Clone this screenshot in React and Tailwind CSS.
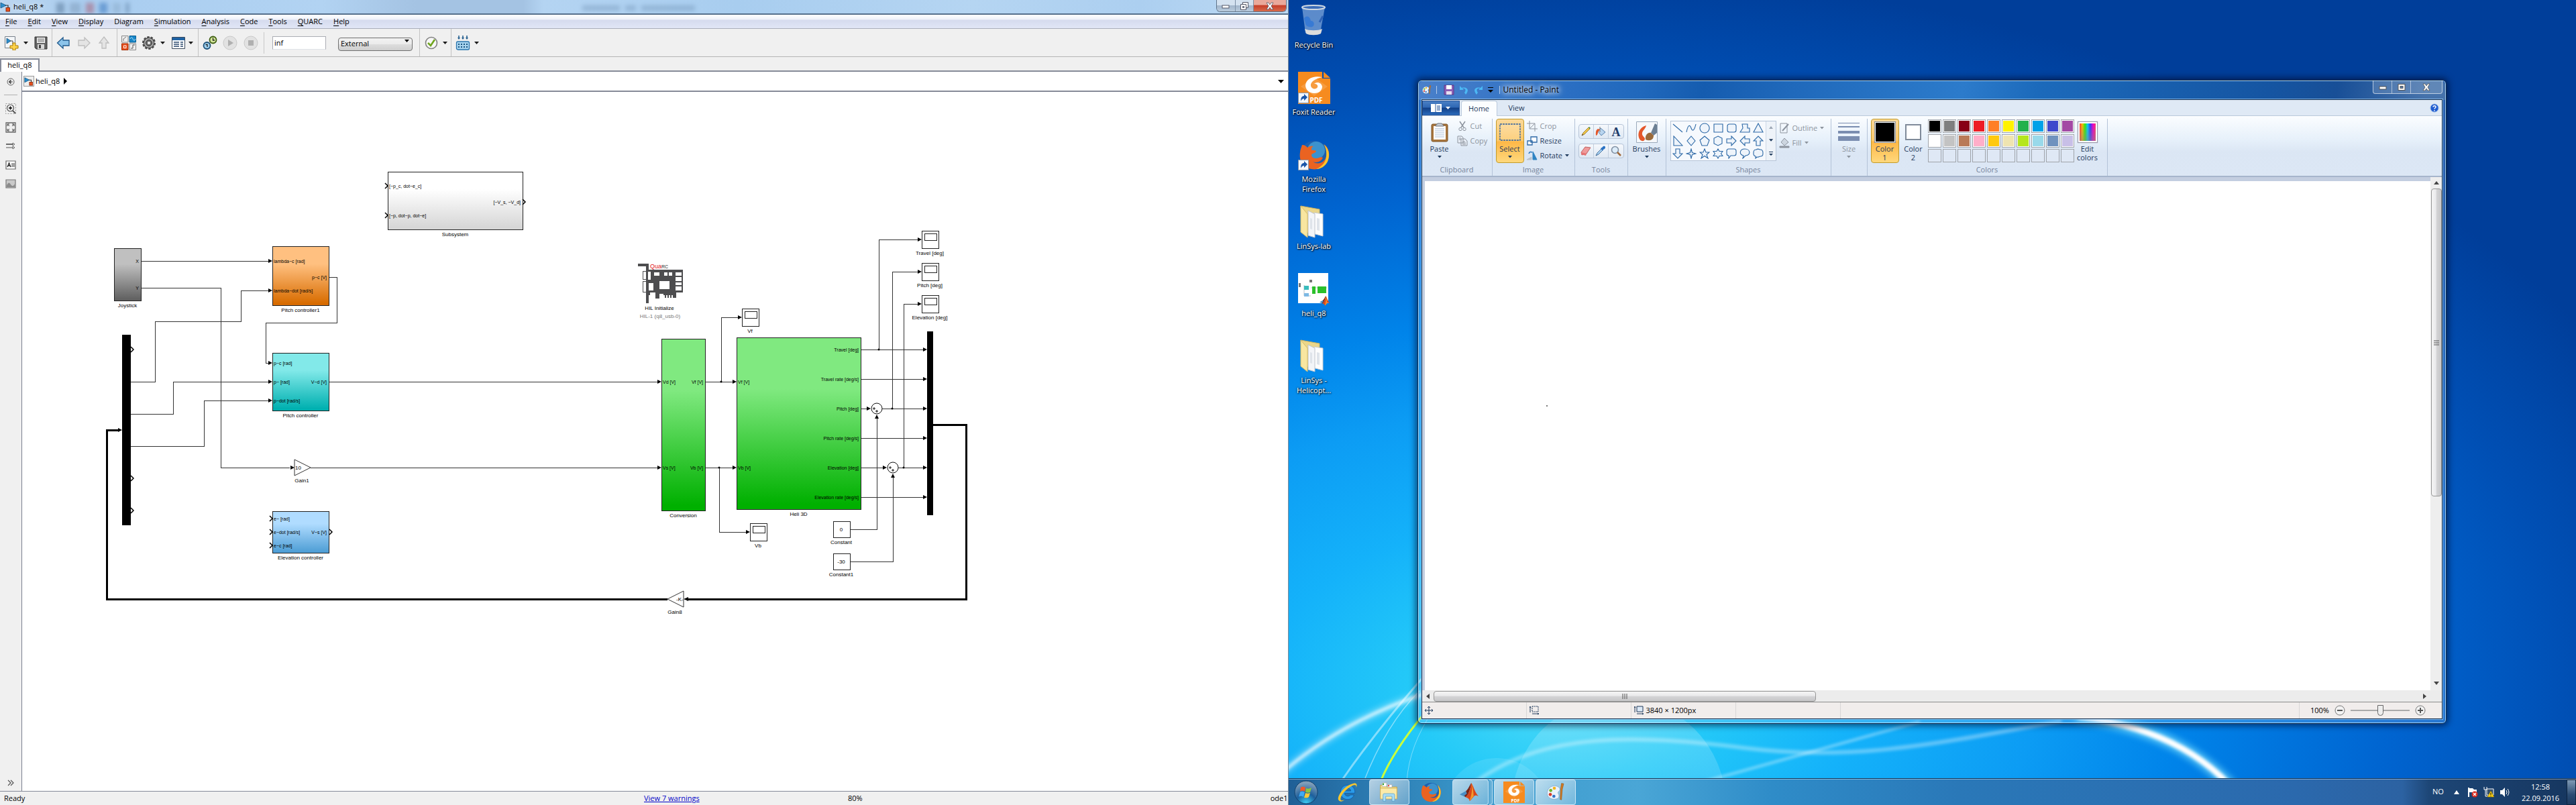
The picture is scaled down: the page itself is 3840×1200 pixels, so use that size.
import React from "react";

/* ---------- shared bits ---------- */

const Caret = ({ className = "text-[#1a1a1a]" }) => (
  <svg className={`h-1 w-2 shrink-0 ${className}`} viewBox="0 0 8 4">
    <path d="M0 0h7L3.5 4z" fill="currentColor" />
  </svg>
);

const ModelIcon = ({ className = "h-4 w-4" }) => (
  <svg className={className} viewBox="0 0 16 16">
    <path d="M1 2l8 4-8 4z" fill="#2b8fce" stroke="#15527d" strokeWidth=".8" />
    <path d="M8 6h4v4" fill="none" stroke="#333" strokeWidth="1.2" />
    <rect x="9" y="9.500" width="5.500" height="5.500" fill="#e8501e" stroke="#7a2000" strokeWidth=".8" />
  </svg>
);

/* ---------- Simulink: title and menu ---------- */

const MENU = [
  ["", "F", "ile"], ["", "E", "dit"], ["", "V", "iew"], ["", "D", "isplay"], ["Dia", "g", "ram"],
  ["", "S", "imulation"], ["", "A", "nalysis"], ["", "C", "ode"], ["", "T", "ools"], ["", "Q", "UARC"], ["", "H", "elp"],
];

function SimulinkTitle() {
  return (
    <header className="relative flex h-[22px] shrink-0 items-center overflow-hidden border-b-2 border-[#56708c] bg-[linear-gradient(90deg,#bcd6ef_0px,#a9cdf0_130px,#b2d3f2_480px,#a4c3e3_620px,#a4c3e3_780px,#b4d4f2_810px,#a8cdef_1100px,#b5d5f2_1450px,#accff0_1700px,#bcd9f3_1900px)]">
      <div className="absolute left-[84px] top-1 flex gap-2 blur-[3px]">
        <i className="h-4 w-3 bg-[#5f7f9e]/60" />
        <i className="h-4 w-4 bg-[#7b98b5]/50" />
        <i className="h-4 w-3 bg-[#a8697e]/60" />
        <i className="h-4 w-3 bg-[#3f7cc0]/60" />
        <i className="h-4 w-3 bg-[#8aa9c8]/50" />
        <i className="h-4 w-1 bg-[#4b6d90]/60" />
      </div>
      <div className="absolute left-[868px] top-2 flex gap-2 opacity-30 blur-[3px]">
        <i className="h-2 w-14 bg-[#55769a]" />
        <i className="h-2 w-4 bg-[#55769a]" />
        <i className="h-2 w-20 bg-[#55769a]" />
      </div>
      <ModelIcon className="h-4 w-4 shrink-0" />
      <h1 className="pl-1 text-[11px] text-black [text-shadow:0_0_6px_#fff]">heli_q8 *</h1>
      <div className="absolute right-[2px] top-0 flex h-[18px] overflow-hidden rounded-b-md border border-t-0 border-[#5f7388]">
        <button aria-label="Minimize" className="flex w-7 items-center justify-center border-r border-[#7c90a6] bg-[linear-gradient(#d4e2f0_45%,#a3b7cc_50%,#b9cbdd)]">
          <svg className="h-3 w-3" viewBox="0 0 12 12"><rect x="1" y="5" width="10" height="4" fill="#fff" stroke="#535666" /></svg>
        </button>
        <button aria-label="Restore" className="flex w-[27px] items-center justify-center border-r border-[#7c90a6] bg-[linear-gradient(#d4e2f0_45%,#a3b7cc_50%,#b9cbdd)]">
          <svg className="h-3 w-3" viewBox="0 0 12 12" fill="#fff" stroke="#535666"><path d="M3.500 .5h8v8h-8z" /><path d="M.5 3.500h8v8h-8z" /><path d="M3.500 6.500h2v2h-2z" fill="#a3b7cc" /></svg>
        </button>
        <button aria-label="Close" className="flex w-12 items-center justify-center bg-[linear-gradient(#e9a99b_40%,#c7402a_50%,#d66b4c)]">
          <svg className="h-3 w-3" viewBox="0 0 12 12"><path d="M1 1h3l2 3 2-3h3L8 6l3 5H8L6 8l-2 3H1l3-5z" fill="#fff" stroke="#535666" strokeWidth=".8" /></svg>
        </button>
      </div>
    </header>
  );
}

function SimulinkMenu() {
  return (
    <nav className="flex h-5 shrink-0 items-center bg-[linear-gradient(#ffffff,#eef1f9_35%,#d5dbee_40%,#e1e6f6)] text-[11px] text-black">
      {MENU.map(([a, b, c]) => (
        <button key={a + b + c} className="px-2">{a}<span className="underline underline-offset-2">{b}</span>{c}</button>
      ))}
    </nav>
  );
}

/* ---------- Simulink: tool bar ---------- */

const Tool = ({ label, children, w = "w-[22px]" }) => (
  <button aria-label={label} className={`flex h-[22px] shrink-0 items-center justify-center ${w}`}>{children}</button>
);
const ico = "h-[22px] w-[22px]";
const group = "flex h-full items-center border-r border-[#c3c3c3]";

function SimulinkToolbar() {
  return (
    <div className="flex h-[43px] shrink-0 items-center border-y border-b-[#b4b4b4] border-t-[#a9adba] bg-[#f0f0f0]">
      <div className={`${group} w-[78px] pl-1.5`}>
        <Tool label="New model">
          <svg className={ico} viewBox="0 0 22 22">
            <path d="M1.500 1.500h15v17h-15z" fill="#f4f6f8" stroke="#77808a" />
            <path d="M4 4l6 4-6 4z" fill="#2b8fce" stroke="#15527d" strokeWidth=".8" /><path d="M9 8h4v5" fill="none" stroke="#444" />
            <path d="M13 11h4v4h4v4h-4v3h-4v-3H9v-4h4z" fill="#ffd34a" stroke="#a67900" />
          </svg>
        </Tool>
        <span className="flex w-[18px] justify-center pl-1"><Caret /></span>
        <span className="w-1" />
        <Tool label="Save">
          <svg className={ico} viewBox="0 0 22 22">
            <path d="M2 2h18v18H4l-2-2z" fill="#636363" stroke="#333" /><path d="M5 3h12v8H5z" fill="#fff" /><path d="M6 5h10M6 7h10M6 9h10" stroke="#666" />
            <path d="M6 13h10v7H6z" fill="#d8d8d8" /><path d="M8 14h3v5H8z" fill="#444" />
          </svg>
        </Tool>
      </div>
      <div className={`${group} w-[97px] gap-2 pl-1.5`}>
        <Tool label="Back">
          <svg className={ico} viewBox="0 0 22 22"><path d="M1.500 11L10 3v4h9v8h-9v4z" fill="#8cc4ea" stroke="#20598c" strokeWidth="1.300" /></svg>
        </Tool>
        <Tool label="Forward">
          <svg className={ico} viewBox="0 0 22 22"><path d="M20 11l-8 -8v4H3v8h9v4z" fill="#e4e4e4" stroke="#bdbdbd" strokeWidth="1.300" /></svg>
        </Tool>
        <Tool label="Up to parent">
          <svg className={ico} viewBox="0 0 22 22"><path d="M11 2l7 9h-4v8H8v-8H4z" fill="#e4e4e4" stroke="#bdbdbd" strokeWidth="1.300" /></svg>
        </Tool>
      </div>
      <div className={`${group} w-[121px] pl-[6px]`}>
        <Tool label="Library browser">
          <svg className={ico} viewBox="0 0 22 22">
            <path d="M.5 .5h9.500v9.500H.5z" fill="#eee" stroke="#888" /><path d="M3 8V5l4-3" stroke="#777" fill="none" />
            <path d="M12 .5h9.500v9.500H12z" fill="#1787c9" stroke="#0d5e91" /><path d="M13 5c2-4 3-2 4 0s2 4 4 0" stroke="#bfe4f8" fill="none" />
            <path d="M.5 12H10v9.500H.5z" fill="#e8501e" stroke="#a33008" /><path d="M3.500 15h3.500v3.500H3.500z" fill="none" stroke="#fff" />
            <path d="M12 12h9.500v9.500H12z" fill="#eee" stroke="#888" /><path d="M14 19h3v-5h3" stroke="#555" fill="none" />
          </svg>
        </Tool>
        <span className="w-2" />
        <Tool label="Model configuration">
          <svg className={ico} viewBox="0 0 22 22">
            <circle cx="11" cy="11" r="8.500" fill="#8b8b8b" stroke="#4a4a4a" strokeWidth="3" strokeDasharray="3.300 2" />
            <circle cx="11" cy="11" r="7.500" fill="#a9a9a9" stroke="#444" /><circle cx="11" cy="11" r="4.500" fill="#6d6d6d" stroke="#333" /><circle cx="11" cy="11" r="2" fill="#f0f0f0" />
          </svg>
        </Tool>
        <span className="w-1.5" /><Caret /><span className="w-2" />
        <Tool label="Model explorer">
          <svg className={ico} viewBox="0 0 22 22">
            <path d="M1.500 2.500h19v17h-19z" fill="#fff" stroke="#3b4a5c" /><path d="M2 3h18v4H2z" fill="#1f63a5" />
            <path d="M4 10h8M14 10h4M4 13h8M14 13h4M4 16h8M14 16h4" stroke="#27466b" strokeWidth="1.500" />
          </svg>
        </Tool>
        <span className="w-1" /><Caret />
      </div>
      <div className={`${group} w-[330px] pl-[6px]`}>
        <Tool label="Stepping options">
          <svg className={ico} viewBox="0 0 22 22">
            <circle cx="15.500" cy="6.500" r="5" fill="#d3e59b" stroke="#3f5f13" strokeWidth="1.800" /><path d="M15.500 3.500v3.500h2.500" fill="none" stroke="#222" strokeWidth="1.300" />
            <circle cx="6.500" cy="15" r="5" fill="#9fd0ee" stroke="#1c5078" strokeWidth="1.800" /><path d="M4.500 13.500h2.500v3.500" fill="none" stroke="#222" strokeWidth="1.300" />
          </svg>
        </Tool>
        <span className="w-2" />
        <Tool label="Run">
          <svg className={ico} viewBox="0 0 22 22"><circle cx="11" cy="11" r="10" fill="#e2e2e2" stroke="#c9c9c9" /><path d="M8 6l8 5-8 5z" fill="#b0b0b0" /></svg>
        </Tool>
        <span className="w-[9px]" />
        <Tool label="Stop">
          <svg className={ico} viewBox="0 0 22 22"><circle cx="11" cy="11" r="10" fill="#e2e2e2" stroke="#c9c9c9" /><path d="M7 7h8v8H7z" fill="#b0b0b0" /></svg>
        </Tool>
        <span className="ml-2 h-8 w-px bg-[#c9c9c9]" />
        <input aria-label="Simulation stop time" defaultValue="inf" className="ml-3 h-5 w-20 border border-[#abadb3] border-b-[#dfe3e8] bg-white px-0.5 text-[11px] text-black" />
        <div className="relative ml-[18px]">
          <select aria-label="Simulation mode" className="h-5 w-[111px] appearance-none rounded-sm border border-[#707070] bg-[linear-gradient(#f2f2f2,#ebebeb_50%,#dddddd_51%,#cfcfcf)] pl-[3px] text-[11px] text-black">
            <option>External</option>
            <option>Normal</option>
          </select>
          <span className="pointer-events-none absolute right-1 top-2"><Caret className="text-black" /></span>
        </div>
      </div>
      <div className={`${group} w-[47px] pl-1.5`}>
        <Tool label="Model advisor">
          <svg className={ico} viewBox="0 0 22 22"><circle cx="11" cy="11" r="8.500" fill="#f7f7f7" stroke="#828282" strokeWidth="1.600" /><path d="M6 11l4 4 6-9" fill="none" stroke="#6fa51d" strokeWidth="2.600" /></svg>
        </Tool>
        <span className="w-1.5" /><Caret />
      </div>
      <div className="flex h-full items-center pl-1.5">
        <Tool label="Build model">
          <svg className={ico} viewBox="0 0 22 22">
            <path d="M5 0v4M11 0v4M17 0v4" stroke="#1b588a" strokeWidth="1.500" /><path d="M3 3h4l-2 3zM9 3h4l-2 3zM15 3h4l-2 3z" fill="#1b588a" />
            <rect x="1.500" y="9" width="19" height="12" rx="2" fill="#a8d4ef" stroke="#2a75ad" strokeWidth="1.300" /><path d="M4 13h15M4 17h15" stroke="#15527d" strokeWidth="2" strokeDasharray="2 2" />
          </svg>
        </Tool>
        <span className="w-1.5" /><Caret />
      </div>
    </div>
  );
}

/* ---------- Simulink: palette ---------- */

function Palette() {
  const s = "h-4 w-4";
  return (
    <aside className="flex w-8 shrink-0 flex-col items-center bg-[#f0f0f0] pt-[7px]">
      <button aria-label="Hide browser"><svg className={s} viewBox="0 0 16 16"><circle cx="8" cy="8" r="5" fill="none" stroke="#666" /><path d="M11 8H6M8 5L5 8l3 3z" fill="#555" stroke="#555" /></svg></button>
      <hr className="mb-3 mt-[11px] w-5 border-[#b0b0b0]" />
      <div className="flex flex-col items-center gap-3">
        <button aria-label="Zoom"><svg className={s} viewBox="0 0 16 16"><path d="M.5 .5h15v15H.5z" fill="none" stroke="#999" strokeDasharray="2 2" /><circle cx="7.500" cy="7" r="5" fill="#f3f3f3" stroke="#555" strokeWidth="1.200" /><path d="M5 7h5M7.500 4.500v5" stroke="#000" strokeWidth="1.400" /><path d="M11 11l4 4" stroke="#555" strokeWidth="2" /></svg></button>
        <button aria-label="Fit to view"><svg className={s} viewBox="0 0 16 16"><path d="M1 1h14v14H1z" fill="#eee" stroke="#666" strokeWidth="1.300" /><path d="M3 6V3h3M3 3l3 3M10 3h3v3M13 3l-3 3M3 10v3h3M3 13l3-3M13 10v3h-3M13 13l-3-3" fill="none" stroke="#444" /></svg></button>
        <button aria-label="Sample time"><svg className={s} viewBox="0 0 16 16"><path d="M1 5h11" stroke="#222" strokeWidth="1.300" /><path d="M1 10h11" stroke="#777" strokeWidth="1.300" /><path d="M11 3l3 2-3 2zM11 8l3 2-3 2z" fill="#fff" stroke="#444" strokeWidth=".8" /></svg></button>
        <button aria-label="Annotation"><svg className={s} viewBox="0 0 16 16"><path d="M1 2h14v12H1z" fill="#fff" stroke="#666" strokeWidth="1.200" /><path d="M3 11l2.500-6L8 11M4 9h3" fill="none" stroke="#222" strokeWidth="1.300" /><path d="M9 6h5M9 8h5M9 10h5" stroke="#444" /></svg></button>
        <button aria-label="Image"><svg className={s} viewBox="0 0 16 16"><path d="M1 2h14v12H1z" fill="#c9c9c9" stroke="#777" strokeWidth="1.200" /><path d="M2 10c3-5 4-4 6-1s4 3 6-1v5H2z" fill="#8b8b8b" /></svg></button>
      </div>
      <button aria-label="Show more" className="mb-1 mt-auto"><svg className={s} viewBox="0 0 16 16"><path d="M4 4l4 4-4 4M8 4l4 4-4 4" fill="none" stroke="#555" strokeWidth="1.200" /></svg></button>
    </aside>
  );
}

/* ---------- Simulink: block diagram ---------- */

const GRADS = {
  gray: ["#c0c0c0", "#626262"], orange: ["#ffc080", "#d86c00"], teal: ["#82e9e9", "#00b0b0"],
  blue: ["#b0dcff", "#509fd6"], green: ["#80e980", "#00b000"], white: ["#ffffff", "#d6d6d6"],
};

const WIRES = [
  "M211 389H400", "M211 429H329V697H432", "M195 569H231V479H359V433H400", "M195 617H258V569H400",
  "M195 665H304V597H400", "M491 413H502V481H396V541H400", "M491 569H980", "M463 697H980",
  "M1051 569H1092", "M1051 697H1092", "M1075 569V473H1100", "M1072 697V793H1112",
  "M1283 521H1376", "M1283 565H1376", "M1283 609H1292", "M1315 609H1376", "M1283 653H1376", "M1283 697H1316",
  "M1339 697H1376", "M1283 741H1376", "M1310 521V357H1368", "M1330 609V405H1368", "M1347 697V453H1368",
  "M1267 789H1307V624", "M1267 837H1331V712",
];
const ARROWS = [
  [406, 389], [439, 697], [406, 433], [406, 569], [406, 597], [406, 541], [986, 569], [986, 697], [1098, 569], [1098, 697],
  [1106, 473], [1118, 793], [1382, 521], [1382, 565], [1298, 609], [1382, 609], [1382, 653], [1322, 697], [1382, 697],
  [1382, 741], [1374, 357], [1374, 405], [1374, 453], [182, 641],
];
const DOTS = [[1075, 569], [1072, 697], [1310, 521], [1330, 609], [1347, 697]];
const PORTS = [[195, 521], [195, 713], [195, 761], [402, 773], [402, 793], [402, 813], [491, 793], [574, 277], [574, 321], [779, 301]];

const BLOCKS = [
  { x: 170, y: 370, w: 40, h: 78, c: "gray", name: "Joystick", outs: [["X", 389], ["Y", 429]] },
  { x: 406, y: 367, w: 84, h: 88, c: "orange", name: "Pitch controller1", ins: [["lambda~c [rad]", 389], ["lambda~dot [rad/s]", 433]], outs: [["p~c [V]", 413]] },
  { x: 406, y: 526, w: 84, h: 86, c: "teal", name: "Pitch controller", ins: [["p~c [rad]", 541], ["p~ [rad]", 569], ["p~dot [rad/s]", 597]], outs: [["V~d [V]", 569]] },
  { x: 406, y: 762, w: 84, h: 62, c: "blue", name: "Elevation controller", ins: [["e~ [rad]", 773], ["e~dot [rad/s]", 793], ["e~c [rad]", 813]], outs: [["V~s [V]", 793]] },
  { x: 578, y: 256, w: 201, h: 86, c: "white", name: "Subsystem", ins: [["[~p_c, dot~e_c]", 277], ["[~p, dot~p, dot~e]", 321]], outs: [["[~V_s, ~V_d]", 301]] },
  { x: 986, y: 505, w: 65, h: 256, c: "green", name: "Conversion", ins: [["Vd [V]", 569], ["Vs [V]", 697]], outs: [["Vf [V]", 569], ["Vb [V]", 697]] },
  { x: 1098, y: 503, w: 185, h: 256, c: "green", name: "Heli 3D", ins: [["Vf [V]", 569], ["Vb [V]", 697]], outs: [["Travel [deg]", 521], ["Travel rate [deg/s]", 565], ["Pitch [deg]", 609], ["Pitch rate [deg/s]", 653], ["Elevation [deg]", 697], ["Elevation rate [deg/s]", 741]] },
];
const SCOPES = [
  [1374, 344, "Travel [deg]"], [1374, 392, "Pitch [deg]"], [1374, 440, "Elevation [deg]"], [1106, 460, "Vf"], [1118, 780, "Vb"],
];

function Name({ x, y, children, fill = "#000" }) {
  return <text x={x} y={y} textAnchor="middle" fontSize="8" fill={fill}>{children}</text>;
}

function Diagram() {
  return (
    <svg className="absolute inset-0 h-full w-full font-['Liberation_Sans',sans-serif]" role="img" aria-label="Helicopter model">
      <defs>
        {Object.entries(GRADS).map(([k, [a, b]]) => (
          <linearGradient key={k} id={`g-${k}`} x1="0" y1="0" x2="0" y2="1">
            <stop offset="0" stopColor={a} /><stop offset=".3" stopColor={a} /><stop offset=".97" stopColor={b} />
          </linearGradient>
        ))}
      </defs>
      <g transform="translate(-33 -137)">
        <g fill="none" stroke="#333" shapeRendering="crispEdges">
          {WIRES.map((d) => <path key={d} d={d} />)}
          <path d="M995 893H159V641H176M1391 633H1440V893H1026" stroke="#000" strokeWidth="3" />
        </g>
        {ARROWS.map(([x, y]) => <path key={`${x} ${y}`} d={`M${x} ${y}l-6-3v6z`} />)}
        <path d="M1019 893l7-3v6zM1307 618l-3 6h6zM1331 706l-3 6h6z" />
        {DOTS.map(([x, y]) => <circle key={x} cx={x} cy={y} r="1.500" />)}

        {BLOCKS.map((b) => (
          <g key={b.name}>
            <rect x={b.x + 1} y={b.y + 1} width={b.w} height={b.h} fill="#000" opacity=".35" />
            <rect x={b.x} y={b.y} width={b.w} height={b.h} fill={`url(#g-${b.c})`} stroke="#222" shapeRendering="crispEdges" />
            {(b.ins || []).map(([t, y]) => <text key={t} x={b.x + 2} y={y + 3} fontSize="7">{t}</text>)}
            {(b.outs || []).map(([t, y]) => <text key={t} x={b.x + b.w - 3} y={y + 3} fontSize="7" textAnchor="end">{t}</text>)}
            <Name x={b.x + b.w / 2} y={b.y + b.h + 10}>{b.name}</Name>
          </g>
        ))}

        {PORTS.map(([x, y]) => <path key={`${x} ${y}`} d={`M${x} ${y - 4}l4 4-4 4`} fill="none" stroke="#000" strokeWidth="1.500" />)}
        <rect x="182" y="499" width="13" height="284" /><rect x="1382" y="494" width="9" height="274" />

        {SCOPES.map(([x, y, n]) => (
          <g key={n}>
            <g fill="#fff" stroke="#222" shapeRendering="crispEdges">
              <rect x={x} y={y} width="25" height="26" /><rect x={x + 4} y={y + 4} width="18" height="10" />
            </g>
            <Name x={x + 12} y={y + 36}>{n}</Name>
          </g>
        ))}

        {[[777, "0", "Constant"], [825, "-30", "Constant1"]].map(([y, v, n]) => (
          <g key={n}>
            <rect x="1242" y={y} width="25" height="24" fill="#fff" stroke="#222" shapeRendering="crispEdges" />
            <Name x={1254} y={y + 15}>{v}</Name><Name x={1254} y={y + 34}>{n}</Name>
          </g>
        ))}

        {[[1307, 609], [1331, 697]].map(([x, y]) => (
          <g key={x} stroke="#111" fill="#fff">
            <circle cx={x} cy={y} r="8" /><path d={`M${x - 6} ${y}h4M${x - 4} ${y - 2}v4M${x - 2} ${y + 4}h4M${x} ${y + 2}v4`} />
          </g>
        ))}

        <path d="M439 685v24l24-12z" fill="#fff" stroke="#333" /><text x="440" y="700" fontSize="8">10</text><Name x={450} y={719}>Gain1</Name>
        <path d="M1019 881v24l-24-12z" fill="#fff" stroke="#333" /><text x="1008" y="896" fontSize="8">-K-</text><Name x={1006} y={915}>Gain8</Name>

        <g shapeRendering="crispEdges">
          <path d="M951 393h16v9h51v34h-10v8h-19v-6h-6v7h-6v-9h-8v4h-2v12h-4V397h-12z" fill="#4d4d4f" />
          <path d="M958 404h5v12h-5zM958 419h5v16h-5z" fill="#fff" stroke="#4d4d4f" strokeWidth="1" />
          <path d="M966 405h4v12h-4zM967 422h7v11h-7zM975 406h8v5h-8zM990 406h5v5h-5zM997 406h5v5h-5zM983 419h15v12h-15zM1007 406h9v5h-9zM1007 413h9v6h-9zM1007 421h9v4h-9zM1007 427h9v6h-9zM989 440h2v4h-2zM993 440h2v4h-2zM997 440h2v4h-2zM1001 440h2v4h-2z" fill="#fff" />
        </g>
        <text x="969" y="400" fontSize="9" fill="#e01020">Qua<tspan fontSize="7" fill="#222">RC</tspan></text>
        <Name x={983} y={462}>HIL Initialize</Name>
        <Name x={984} y={474} fill="#777">HIL-1 (q8_usb-0)</Name>
      </g>
    </svg>
  );
}

function Simulink() {
  return (
    <section className="flex min-w-0 flex-1 flex-col border-r border-[#7b8794] bg-[#f0f0f0]">
      <SimulinkTitle />
      <SimulinkMenu />
      <SimulinkToolbar />
      <div className="flex h-[22px] shrink-0 items-stretch border-b-2 border-[#858a98]">
        <button className="relative top-0.5 w-[59px] border-x-2 border-t-2 border-[#858a98] bg-white pb-1 text-[11px] leading-4 text-black">heli_q8</button>
      </div>
      <div className="flex min-h-0 flex-1">
        <Palette />
        <div className="flex min-w-0 flex-1 flex-col border-l border-[#7b8090]">
          <div className="flex h-[30px] shrink-0 items-center border-b-2 border-[#858a98] bg-white pl-0.5 pr-1.5 text-[11px] text-black">
            <span className="mr-0.5 border border-[#999] bg-[#eee]"><ModelIcon className="h-3.5 w-3.5" /></span>
            heli_q8
            <svg className="ml-1.5 h-2.5 w-1.5" viewBox="0 0 6 10"><path d="M0 0l5 5-5 5z" /></svg>
            <button aria-label="Model history" className="ml-auto"><svg className="h-[5px] w-[9px]" viewBox="0 0 9 5"><path d="M0 0h9L4.500 5z" /></svg></button>
          </div>
          <main className="relative flex-1 overflow-hidden bg-white"><Diagram /></main>
        </div>
      </div>
      <footer className="grid h-[21px] shrink-0 grid-cols-[960px_304px_1fr_auto] items-center overflow-hidden border-t border-[#858a98] text-[11px] text-black">
        <span className="pl-1.5">Ready</span>
        <span><a href="#warnings" className="text-[#0000c8] underline">View 7 warnings</a></span>
        <span>80%</span>
        <span>ode1</span>
      </footer>
    </section>
  );
}

/* ---------- desktop ---------- */

function Wallpaper() {
  return (
    <svg className="absolute inset-0 h-full w-full" preserveAspectRatio="none" viewBox="0 0 1920 1200" aria-hidden="true">
      <defs>
        <radialGradient id="sky" gradientUnits="userSpaceOnUse" cx="0" cy="0" r="1" gradientTransform="translate(400 1040) scale(1780 1080)">
          <stop offset="0" stopColor="#4cdaf8" /><stop offset=".12" stopColor="#24caf8" /><stop offset=".25" stopColor="#14b2fa" />
          <stop offset=".4" stopColor="#0c9cf4" /><stop offset=".52" stopColor="#0084ea" /><stop offset=".7" stopColor="#0064d0" />
          <stop offset=".85" stopColor="#004fb4" /><stop offset="1" stopColor="#003e9a" />
        </radialGradient>
        <linearGradient id="disc" x1="0" y1="0" x2="0" y2="1"><stop offset="0" stopColor="#fff" stopOpacity=".22" /><stop offset="1" stopColor="#fff" stopOpacity="0" /></linearGradient>
        <filter id="b2"><feGaussianBlur stdDeviation="2" /></filter>
        <filter id="b5"><feGaussianBlur stdDeviation="5" /></filter>
      </defs>
      <rect width="1920" height="1200" fill="url(#sky)" />
      <circle cx="492" cy="1200" r="160" fill="url(#disc)" />
      <circle cx="310" cy="1210" r="80" fill="url(#disc)" opacity=".5" />
      <g fill="none" stroke="#fff" strokeLinecap="round">
        <path d="M-10 1152Q80 1075 200 1035" strokeWidth="10" opacity=".4" filter="url(#b5)" />
        <path d="M-10 1152Q80 1075 200 1035" strokeWidth="4" opacity=".75" filter="url(#b2)" />
        <path d="M200 1010Q130 1090 78 1165" strokeWidth="3" opacity=".45" />
        <path d="M195 1030Q145 1080 112 1165" strokeWidth="1.500" opacity=".45" />
        <path d="M215 1060Q180 1110 176 1165" strokeWidth="1" opacity=".4" />
        <path d="M205 1060Q155 1120 137 1165" stroke="#c8ff3c" strokeWidth="3" />
        <path d="M280 1165C380 1090 520 1095 680 1115S960 1110 1150 1075" strokeWidth="6" opacity=".35" filter="url(#b2)" />
        <path d="M620 1165Q780 1120 940 1076" strokeWidth="3" opacity=".5" filter="url(#b2)" />
        <path d="M1180 1068C1300 1085 1380 1130 1435 1210" stroke="#7fe4ff" strokeWidth="20" opacity=".6" filter="url(#b5)" />
        <path d="M1180 1068C1300 1085 1380 1130 1435 1210" strokeWidth="9" filter="url(#b2)" />
      </g>
    </svg>
  );
}

const Shortcut = () => (
  <g><path d="M.5 31.500h15v15H.5z" fill="#f2f6fb" stroke="#8b98a8" /><path d="M4 44c0-6 2-8 5-8v-3l5 5-5 5v-3c-2 0-4 1-5 4z" fill="#1b56a8" /></g>
);

const FirefoxArt = () => (
  <g>
    <circle cx="24" cy="24" r="21" fill="#1d5fae" /><circle cx="27" cy="17" r="13" fill="#49a8dc" opacity=".7" />
    <path d="M6 9c4 0 6 2 8 4 4-3 9-2 9-2-4 2-3 5-2 6 3 0 5 0 6 1-1 4-6 3-7 6 0 3 3 5 7 5 5 0 6-3 10-1-3 7-10 8-15 6 8 6 20 1 21-12 1-6-2-11-4-14 6 5 8 12 7 19-3 14-14 20-26 18C8 43 1 33 3 20c0-4 2-7 3-11z" fill="#ea6321" />
    <path d="M38 8c8 6 10 16 6 26-4 7-10 11-17 11 9-4 14-10 15-19 1-7-1-14-4-18z" fill="#fbc52c" />
  </g>
);
const FoxitArt = () => (
  <g>
    <path d="M0 0h36v10h12v38H0zM38 0l10 9H38z" fill="#f68b1f" /><path d="M24 8l20 14-20 14L4 22z" fill="#fff" opacity=".15" />
    <path d="M36 8c-13-3-24 2-25 12 0 7 6 12 13 12 8 0 12-5 12-10-1-6-8-8-12-4 4 0 6 2 5 5-2 4-9 3-10-2-1-6 7-11 17-13z" fill="#fff" />
    <text x="27" y="46" textAnchor="middle" fontSize="10" fontWeight="bold" fill="#fff">PDF</text>
  </g>
);
const FolderArt = () => (
  <g>
    <path d="M4 0l28 5v34L6 40z" fill="#ead68a" stroke="#cbb05c" /><path d="M24 10l13 2v33l-15-4z" fill="#fdfdfd" stroke="#c8ccd2" />
    <path d="M15 7l10 5v35l-10-3z" fill="#f3f5f8" stroke="#bfc5cd" /><path d="M28 18l4 1v18l-4-1zM18 18l3 1v16l-3-1z" fill="#dfe4ea" />
    <path d="M4 0l10 12v35L4 39z" fill="#f8e6a0" stroke="#d6bd68" />
  </g>
);
const MatlabArt = () => (
  <g><path d="M0 29l14-8 7 6-8 8z" fill="#4a8fc4" /><path d="M14 21c4-2 8-12 12-18-2 10-4 24-13 32l-3-3 6-5z" fill="#7a2416" /><path d="M26 3c5 8 8 22 16 30-5-2-8-3-11 1-3 3-5 7-9 10 0-5-4-7-9-9 9-8 11-22 13-32z" fill="#d9481a" /><path d="M26 3c3 10 1 26-4 40 4-3 6-7 9-10 0-10-2-22-5-30z" fill="#f29a2e" /></g>
);

const ART = {
  bin: (
    <g>
      <path d="M6 4l5 38c4 4 18 4 22 0l7-38z" fill="#a8c8ee" opacity=".55" /><path d="M9 20c4-5 9-2 10 4 6 0 6 8 2 9-6 1-10-2-10-5z" fill="#2f76d6" opacity=".8" />
      <path d="M32 26l5-9" stroke="#2f62b5" strokeWidth="3" /><ellipse cx="23" cy="4" rx="17" ry="3" fill="#3a6cb8" stroke="#cfd8e2" strokeWidth="2" />
      <path d="M10 36c6 3 20 3 26 0l-2 7c-5 3-17 3-22 0z" fill="#dcdcdc" />
    </g>
  ),
  foxit: <g><FoxitArt /><Shortcut /></g>,
  firefox: <g><FirefoxArt /><Shortcut /></g>,
  folder: <FolderArt />,
  model: (
    <g>
      <path d="M0 0h45v45H0z" fill="#fff" /><path d="M9 18v16h10M19 22h24" stroke="#b8c4cc" fill="none" /><path d="M1 15h3v6H1zM17 10h4v4h-4z" fill="#777" />
      <path d="M9 19h7v6H9z" fill="#39bcbc" /><path d="M9 30h7v5H9z" fill="#7db9e4" /><path d="M21 20h5v11h-5zM29 20h13v10H29z" fill="#2bc02b" />
      <g transform="translate(32 33) scale(.36)"><MatlabArt /></g>
    </g>
  ),
};
const DESKTOP = [["bin", ["Recycle Bin"]], ["foxit", ["Foxit Reader"]], ["firefox", ["Mozilla", "Firefox"]], ["folder", ["LinSys-lab"]], ["model", ["heli_q8"]], ["folder", ["LinSys -", "Helicopt..."]]];

function DesktopIcons() {
  return (
    <ul className="relative flex w-[76px] flex-col">
      {DESKTOP.map(([k, lines]) => (
        <li key={lines[0]} className="flex h-[100px] flex-col items-center pt-[7px]">
          <svg className="h-12 w-12 overflow-visible" viewBox="0 0 48 48">{ART[k]}</svg>
          <p className="mt-1 whitespace-nowrap text-center text-[11px] leading-[15px] text-white [text-shadow:1px_1px_2px_#000,0_0_3px_#000]">
            {lines.map((l) => <span key={l} className="block">{l}</span>)}
          </p>
        </li>
      ))}
    </ul>
  );
}

/* ---------- Paint ---------- */

const PaletteArt = () => (
  <g>
    <path d="M5 26C5 12 20 6 30 12c6 4 3 9 0 11-3 3 3 6 1 12C28 42 5 42 5 26z" fill="#e9f2fb" stroke="#7a9cc0" />
    <circle cx="13" cy="20" r="3.500" fill="#6fb52c" /><circle cx="21" cy="15" r="3.500" fill="#f3b51d" /><circle cx="12" cy="29" r="3.500" fill="#d73a2a" /><circle cx="20" cy="33" r="3.500" fill="#3273c8" />
    <path d="M37 4l5 1-3 12-2 24-3-1 1-24z" fill="#d27a22" stroke="#8a4a0a" strokeWidth=".8" />
  </g>
);

function PaintTitle() {
  const q = "h-4 w-4";
  return (
    <header className="relative flex h-7 shrink-0 items-center">
      <svg className="h-4 w-4" viewBox="0 0 48 48"><PaletteArt /></svg>
      <span className="mx-[6px] h-3 w-px bg-white/60" />
      <div className="flex items-center gap-[6px] pl-1">
        <button aria-label="Save"><svg className={q} viewBox="0 0 16 16"><path d="M1 1h14v14H1z" fill="#8d5fb5" stroke="#5c3a86" /><path d="M4 1h8v6H4z" fill="#fff" /><path d="M4 10h8v5H4z" fill="#e5dff0" /></svg></button>
        <button aria-label="Undo"><svg className={q} viewBox="0 0 16 16"><path d="M2 2v6h6L6 6c4-1 6 2 3 6l2 3c6-7 2-12-6-10z" fill="#4cb8f4" /></svg></button>
        <button aria-label="Redo"><svg className={q} viewBox="0 0 16 16"><path d="M14 2v6H8l2-2c-4-1-6 2-3 6l-2 3C-1 8 3 3 11 5z" fill="#4cb8f4" /></svg></button>
        <button aria-label="Customize toolbar"><svg className="h-2 w-2" viewBox="0 0 8 8"><path d="M0 0h8v1H0zM0 4h8L4 8z" /></svg></button>
      </div>
      <span className="ml-[9px] mr-[5px] h-3 w-px bg-white/60" />
      <h2 className="text-xs text-black [text-shadow:0_0_6px_#fff,0_0_10px_#fff,0_0_14px_#fff]">Untitled - Paint</h2>
      <div className="absolute right-0 top-0 flex h-5 overflow-hidden rounded-b border border-t-0 border-white/60 bg-white/15">
        <button aria-label="Minimize" className="flex w-7 items-center justify-center border-r border-white/50"><svg className="h-3 w-3" viewBox="0 0 12 12"><rect x="1" y="5" width="10" height="4" fill="#fff" stroke="#555" /></svg></button>
        <button aria-label="Maximize" className="flex w-7 items-center justify-center border-r border-white/50"><svg className="h-3 w-3" viewBox="0 0 12 12"><path d="M2.500 3h7v6h-7z" fill="none" stroke="#555" strokeWidth="4" /><path d="M2.500 3h7v6h-7z" fill="none" stroke="#fff" strokeWidth="2" /></svg></button>
        <button aria-label="Close" className="flex w-[46px] items-center justify-center"><svg className="h-3 w-3" viewBox="0 0 12 12"><path d="M1 1h3l2 3 2-3h3L8 6l3 5H8L6 8l-2 3H1l3-5z" fill="#fff" stroke="#555" strokeWidth=".8" /></svg></button>
      </div>
    </header>
  );
}

function Group({ w, label, children, className = "" }) {
  return (
    <section className={`relative flex shrink-0 flex-col border-r border-[#b4c3d8] ${w}`}>
      <div className={`flex h-[70px] ${className}`}>{children}</div>
      <p className="text-center text-[11px] leading-3 text-[#76839a]">{label}</p>
    </section>
  );
}

const Big = ({ label, lines, children, on, w, off, caret = true }) => (
  <button aria-label={label} className={`flex h-[66px] flex-col items-center rounded-sm ${w} ${on ? "border border-[#c29b29] bg-[linear-gradient(#fcd998,#fdc868_50%,#feb847_52%,#ffd87c)]" : "border border-transparent"} ${off ? "text-[#8d949e]" : "text-[#1e395b]"}`}>
    <span className="flex h-[37px] items-center justify-center">{children}</span>
    {lines.map((l) => <span key={l} className="text-[11px] leading-[13px]">{l}</span>)}
    {caret && <span className="pt-1"><svg className="h-1 w-1.5" viewBox="0 0 6 4"><path d="M0 0h6L3 3.500z" fill="currentColor" /></svg></span>}
  </button>
);

const Small = ({ label, off, caret, children }) => (
  <button className={`flex h-[22px] items-center gap-1 text-[11px] ${off ? "text-[#8d949e]" : "text-[#1e395b]"}`}>
    <svg className="h-4 w-4" viewBox="0 0 16 16" fill="none" stroke="currentColor">{children}</svg>
    {label}
    {caret && <svg className="h-1 w-1.5" viewBox="0 0 6 4"><path d="M0 0h6L3 3.500z" fill="currentColor" /></svg>}
  </button>
);

const TOOLS = [
  ["Pencil", <g key="p"><path d="M2 14l2-4 8-8 2 2-8 8z" fill="#f2c94c" stroke="#8c6512" strokeWidth=".8" /><path d="M12 2l2 2 1-1-2-2z" fill="#3f8f3a" /><path d="M2 14l1-2 1 1z" fill="#222" /></g>],
  ["Fill with color", <g key="f"><path d="M8 3l7 6-6 5-5-6z" fill="#b9d5ef" stroke="#3c6ca0" strokeWidth=".8" /><path d="M7 1v8" stroke="#777" /><path d="M4 4C0 6 1 11 1 14c2 0 3-3 3-5l3-4z" fill="#e4572a" /></g>],
  ["Text", <text key="t" x="8" y="15" textAnchor="middle" fontSize="18" fontWeight="bold" fill="#1f3d6b" className="font-['Liberation_Serif',serif]">A</text>],
  ["Eraser", <g key="e"><path d="M1 10l6-8 8 1-6 9-7 2z" fill="#ef9a9a" stroke="#b24a4a" strokeWidth=".8" /><path d="M1 10l8 2-1 3-7-2z" fill="#e57373" /></g>],
  ["Color picker", <g key="c"><path d="M1 15l2-4 6-6 2 2-6 6z" fill="#a9d3f5" stroke="#24517f" strokeWidth=".8" /><path d="M8 4l2-1 2-2c3-1 4 2 2 4l-2 1-1 2z" fill="#2a72c4" /></g>],
  ["Magnifier", <g key="m"><circle cx="6.500" cy="6.500" r="5" fill="#dcecf9" stroke="#8090a3" strokeWidth="1.600" /><path d="M10 10l5 5" stroke="#a0693a" strokeWidth="2.500" /></g>],
];

const SHAPES = [
  "M1 2l14 12", "M1 14C3 3 6 2 8 8s5 3 7-6", "M8 1a7 7 0 1 0 .1 0z", "M2 2h13v12H2z", "M5 2h7q3 0 3 3v6q0 3-3 3H5q-3 0-3-3V5q0-3 3-3z", "M1 14l4-6-1-6h8v6h3v6z", "M8 1l7 13H1z",
  "M2 1v14h13z", "M8 1l6 7-6 7-6-7z", "M8 1l7 6-3 8H4L1 7z", "M8 1l6 3v8l-6 3-6-3V4z", "M1 5h7V1l7 7-7 7v-4H1z", "M15 5H8V1L1 8l7 7v-4h7z", "M5 15V8H1l7-7 7 7h-4v7z",
  "M5 1v7H1l7 7 7-7h-4V1z", "M8 1l1.500 5.500L15 8 9.500 9.500 8 15 6.500 9.500 1 8l5.500-1.500z", "M8 1l2 5h5l-4 3.500L13 15l-5-3.500L3 15l2-5.500L1 6h5z", "M8 1l2 3.500h5L12.500 8 15 11.500h-5L8 15l-2-3.500H1L3.500 8 1 4.500h5z",
  "M4 1h8q3 0 3 3v4q0 3-3 3H7l-3 4v-4q-3 0-3-3V4q0-3 3-3z", "M8 1c9 0 9 10 1 10l-4 4 1-4C-1 9 0 1 8 1z", "M5 2c3-2 5 0 6 0 4 0 4 3 4 5s0 5-3 5-4 2-6 1l-2 2v-3C0 11 1 8 1 6s1-4 4-4z",
];

const COLORS = [
  "#000000", "#7f7f7f", "#880015", "#ed1c24", "#ff7f27", "#fff200", "#22b14c", "#00a2e8", "#3f48cc", "#a349a4",
  "#ffffff", "#c3c3c3", "#b97a57", "#ffaec9", "#ffc90e", "#efe4b0", "#b5e61d", "#99d9ea", "#7092be", "#c8bfe7",
  ...Array(10).fill(null),
];

function Ribbon() {
  return (
    <div className="flex h-[91px] shrink-0 border-b-2 border-[#a6b5cc] bg-[linear-gradient(#fbfdff,#e6f0fa_40%,#dbe6f4_60%,#dce7f5)] pt-1 ">
      <Group w="w-[105px]" label="Clipboard">
        <Big label="Paste" lines={["Paste"]} w="w-[52px]">
          <svg className="h-[30px] w-[26px]" viewBox="0 0 26 30"><rect x="1" y="3" width="24" height="26" rx="2" fill="#a8763e" stroke="#7d5223" /><path d="M4 6h18v20H4z" fill="#fff" /><path d="M6 10h14M6 13h14M6 16h14M6 19h14M6 22h14" stroke="#a7bdd8" /><path d="M7 6c0-3 3-2 3-4h6c0 2 3 1 3 4z" fill="#c9ced4" stroke="#6b737c" /></svg>
        </Big>
        <div className="flex flex-col">
          <Small label="Cut" off><path d="M4 1l6 9M12 1L6 10" strokeWidth="1.500" /><circle cx="5" cy="12.500" r="2.200" /><circle cx="11" cy="12.500" r="2.200" /></Small>
          <Small label="Copy" off><path d="M1 1h6l2 2v8H1zM6 5h6l3 3v7H6z" fill="#e8eef6" /><path d="M8 9h4M8 11h5M8 13h5M3 4h3M3 6h3" /></Small>
        </div>
      </Group>
      <Group w="w-[123px]" label="Image" className="pl-[5px]">
        <Big label="Select" lines={["Select"]} w="w-[42px]" on>
          <svg className="h-[26px] w-8" viewBox="0 0 32 26"><path d="M1 1h30v24H1z" fill="#fff" fillOpacity=".15" stroke="#2b5f9e" strokeWidth="1.300" strokeDasharray="3 1" /></svg>
        </Big>
        <div className="flex flex-col pl-1">
          <Small label="Crop" off><path d="M4 0v12h12M0 4h12v12M5 11l7-7" /></Small>
          <Small label="Resize"><path d="M6 2h9v8H6zM1 8h7v6H1z" fill="#fff" stroke="#2b67a5" strokeWidth="1.300" /></Small>
          <Small label="Rotate" caret><path d="M9 14V2l6 12z" fill="#2f83c2" stroke="#2f83c2" /><path d="M0 14l7-4v4z" fill="#b9c3cd" stroke="#b9c3cd" /><path d="M3 5c1-3 3-3 5-2" stroke="#2b77c0" strokeWidth="1.500" /></Small>
        </div>
      </Group>
      <Group w="w-[79px]" label="Tools" className="flex-col gap-[7px] pl-[5px] pt-2">
        {[0, 3].map((n) => (
          <div key={n} className="flex h-[22px] w-[68px] divide-x divide-[#c3cfde] rounded-sm border border-[#b7c5d8] bg-[linear-gradient(#f5f8fc,#dfe8f3)]">
            {TOOLS.slice(n, n + 3).map(([name, art]) => (
              <button key={name} aria-label={name} className="flex flex-1 items-center justify-center"><svg className="h-4 w-4 overflow-visible" viewBox="0 0 16 16">{art}</svg></button>
            ))}
          </div>
        ))}
      </Group>
      <Group w="w-[57px]" label="" className="justify-center">
        <Big label="Brushes" lines={["Brushes"]} w="w-[50px]">
          <svg className="h-8 w-8" viewBox="0 0 32 32"><path d="M.5 .5h31v31H.5z" fill="#f5f8fb" stroke="#9aa9bb" /><path d="M15 6C5 9 2 17 4 24s9 6 9 2c0-3-5-4-4-9 1-4 5-6 6-11z" fill="#e4572a" /><path d="M22 17L28 3l3 2v12l-5 4z" fill="#6c7f92" /><path d="M14 27c-1-6 3-11 8-10l4 4c0 6-5 9-12 6z" fill="#9b6a3a" /></svg>
        </Big>
      </Group>
      <Group w="w-[246px]" label="Shapes" className="pl-[6px] pt-[3px]">
        <div className="flex h-[60px] w-[158px] shrink-0 border border-[#b7c5d8] bg-[#f6f9fd]">
          <div className="grid flex-1 grid-cols-7 grid-rows-3">
            {SHAPES.map((d) => (
              <button key={d} aria-label="Shape" className="flex items-center justify-center"><svg className="h-4 w-4" viewBox="0 0 16 16"><path d={d} fill="#eef4fb" stroke="#2b67a5" strokeWidth="1.100" /></svg></button>
            ))}
          </div>
          <div className="flex w-[15px] flex-col items-center justify-around border-l border-[#cdd8e6] bg-[#eef3f9]">
            <svg className="h-1 w-1.5" viewBox="0 0 6 4"><path d="M0 4h6L3 0z" fill="#9aa5b3" /></svg>
            <Caret className="pl-px text-[#1e395b]" />
            <svg className="h-1.5 w-1.5" viewBox="0 0 6 6"><path d="M0 0h6v1H0zM0 3h6L3 6z" fill="#1e395b" /></svg>
          </div>
        </div>
        <div className="flex flex-col pl-1">
          <Small label="Outline" off caret><path d="M2 1h10v14H2z" /><path d="M5 12l9-10" strokeWidth="2" /></Small>
          <Small label="Fill" off caret><path d="M8 1l6 6-6 5-5-5z" fill="#cdd6e0" /><path d="M1 13h14v2H1z" fill="currentColor" /></Small>
        </div>
      </Group>
      <Group w="w-[54px]" label="" className="justify-center">
        <Big label="Size" lines={["Size"]} w="w-[40px]" off>
          <svg className="h-7 w-8" viewBox="0 0 32 28" fill="#7a8db0"><path d="M0 0h32v1H0zM0 5h32v2H0zM0 12h32v4H0zM0 20h32v7H0z" /></svg>
        </Big>
      </Group>
      <Group w="w-[358px]" label="Colors" className="pl-[5px]">
        <Big label="Color 1" lines={["Color", "1"]} w="w-[42px]" on caret={false}><i className="flex h-8 w-8 border border-[#7f8a99] bg-white p-px"><i className="flex-1 bg-black" /></i></Big>
        <Big label="Color 2" lines={["Color", "2"]} w="w-[43px]" caret={false}><i className="h-6 w-6 border-2 border-[#7f8a99] bg-white" /></Big>
        <div className="grid h-[65px] grid-cols-10 gap-0.5 self-start pt-px">
          {COLORS.map((c, i) => (
            <button key={i} aria-label={c ? `Color ${c}` : "Empty color"} className={`h-5 w-5 border border-[#a0a4aa] p-px ${c ? "bg-white" : "bg-[#dfe8f5]"}`}>
              <i className="block h-full w-full" style={{ background: c || "transparent" }} />
            </button>
          ))}
        </div>
        <Big label="Edit colors" lines={["Edit", "colors"]} w="w-[40px]" caret={false}>
          <i className="h-[30px] w-7 border-2 border-white bg-[linear-gradient(transparent,#8888_100%),linear-gradient(90deg,#f33,#fb0,#3e0,#0cf,#33f,#e0c,#f36)] shadow-[0_0_1px_1px_#99a]" />
        </Big>
      </Group>
    </div>
  );
}

function Paint() {
  const cell = "flex h-full items-center border-r border-[#d8d6d6] pl-1";
  return (
    <section className="absolute bottom-[121px] left-48 right-[193px] top-[119px] flex flex-col rounded-md border border-[#0b2a50] bg-[#9cc4ee]/25 px-[5px] pb-[6px] shadow-[0_0_10px_3px_rgba(0,10,40,0.6),inset_0_0_0_1px_rgba(200,235,255,0.75)]">
      <div className="pointer-events-none absolute inset-x-px top-px h-7 rounded-t-md bg-[linear-gradient(100deg,#4a80ca_0px,#2d70c4_200px,#2068bc_330px,#155caf_420px,#2069bb_550px,#2c7bcb_800px,#1c6abb_910px,#1555a2_1250px,#184f97_1350px,#4572ab_1480px)]" />
      <PaintTitle />
      <div className="relative flex min-h-0 flex-1 flex-col border border-[#10294a] bg-[#dfe9f5] outline outline-1 outline-[#a5d4fa]/70">
        <div className="flex h-6 shrink-0 items-end border-b border-[#bac9db] text-[11px] text-[#1e395b]">
          <button aria-label="Paint menu" className="flex h-[22px] w-14 items-center justify-center gap-1.5 border border-[#2a5599] bg-[linear-gradient(#4a7fc4,#2f68b4_45%,#123f85_50%,#2a6abb)]">
            <svg className="h-3 w-4" viewBox="0 0 16 12"><path d="M0 0h16v12H0z" fill="#fff" /><path d="M7 0v12M9 3h5M9 5h5M9 7h5M9 9h5" stroke="#2c5a9e" /></svg>
            <Caret className="text-white" />
          </button>
          <button className="relative top-px ml-0.5 h-[23px] w-[54px] rounded-t-sm border border-b-0 border-[#bac9db] bg-[#fbfdff]">Home</button>
          <button className="h-[22px] w-[58px]">View</button>
          <button aria-label="Help" className="mb-1 ml-auto mr-1"><svg className="h-3.5 w-3.5" viewBox="0 0 14 14"><circle cx="7" cy="7" r="6" fill="#1e5bd0" stroke="#8fb2e6" /><path d="M5 5.500C5 3 9 3 9 5.500 9 7 7 7 7 8.500M7 10v1.500" stroke="#fff" strokeWidth="1.500" fill="none" /></svg></button>
        </div>
        <Ribbon />
        <div className="flex min-h-0 flex-1 bg-[#c3cee0]">
          <div className="relative ml-1 mt-[6px] flex-1 bg-white"><i className="absolute left-[181px] top-[334px] h-0.5 w-0.5 bg-[#777]" /></div>
          <div className="flex w-[17px] flex-col items-center bg-[#eeeeee]">
            <svg className="my-1.5 h-[5px] w-2" viewBox="0 0 8 5"><path d="M4 0l4 5H0z" fill="#444" /></svg>
            <div className="flex h-[60%] w-4 items-center justify-center rounded-sm border border-[#979797] bg-[linear-gradient(90deg,#f5f5f5,#e9e9eb_45%,#d4d4d6_50%,#c6c6c8)]">
              <svg className="h-2 w-2" viewBox="0 0 8 8"><path d="M0 1h8M0 4h8M0 7h8" stroke="#555" /></svg>
            </div>
            <svg className="mb-2 mt-auto h-[5px] w-2" viewBox="0 0 8 5"><path d="M4 5l4-5H0z" fill="#444" /></svg>
          </div>
        </div>
        <div className="flex h-[17px] shrink-0 items-center bg-[#ececec]">
          <svg className="mx-1.5 h-2 w-[5px]" viewBox="0 0 5 8"><path d="M0 4l5-4v8z" fill="#444" /></svg>
          <div className="mr-auto flex h-4 w-3/8 items-center justify-center rounded-sm border border-[#979797] bg-[linear-gradient(#f5f5f5,#e9e9eb_45%,#d4d4d6_50%,#c6c6c8)]">
            <svg className="h-2 w-2" viewBox="0 0 8 8"><path d="M1 0v8M4 0v8M7 0v8" stroke="#555" /></svg>
          </div>
          <svg className="mr-[23px] h-2 w-[5px]" viewBox="0 0 5 8"><path d="M5 4L0 0v8z" fill="#444" /></svg>
        </div>
        <footer className="flex h-[25px] shrink-0 items-center border-t border-[#8c8c8c] bg-[#f1edec] text-[11px] text-black">
          <div className={`${cell} w-[156px]`}><svg className="h-3 w-3" viewBox="0 0 12 12"><path d="M6 0v12M0 6h12M4 2l2-2 2 2M4 10l2 2 2-2M2 4L0 6l2 2M10 4l2 2-2 2" fill="none" stroke="#1e395b" /></svg></div>
          <div className={`${cell} w-[156px]`}><svg className="h-3.5 w-3.5" viewBox="0 0 14 14"><path d="M4 1h9v8H4z" fill="none" stroke="#1e395b" strokeDasharray="2 1" /><path d="M1 10V2M0 3l1-2 1 2M4 12h9M12 11l2 1-2 1" fill="none" stroke="#1e395b" /></svg></div>
          <div className={`${cell} w-[156px] gap-1`}><svg className="h-3.5 w-3.5" viewBox="0 0 14 14"><path d="M4 1h9v8H4z" fill="#dce9f6" stroke="#1e395b" /><path d="M1 10V2M0 3l1-2 1 2M4 12h9M12 11l2 1-2 1" fill="none" stroke="#1e395b" /></svg>3840 × 1200px</div>
          <div className={`${cell} w-[156px]`} />
          <div className="flex-1" />
          <div className="flex h-full items-center border-l border-[#d8d6d6] pl-4 pr-6">
            <label htmlFor="zoom" className="w-9">100%</label>
            <button aria-label="Zoom out" className="mr-2"><svg className="h-4 w-4" viewBox="0 0 16 16"><circle cx="8" cy="8" r="7" fill="#f2f2f2" stroke="#777" /><path d="M4 8h8" stroke="#555" strokeWidth="2" /></svg></button>
            <input id="zoom" type="range" defaultValue="50" className="h-4 w-[88px] appearance-none bg-[linear-gradient(#aaa,#aaa)] bg-[length:100%_2px] bg-center bg-no-repeat [&::-webkit-slider-thumb]:h-4 [&::-webkit-slider-thumb]:w-[9px] [&::-webkit-slider-thumb]:appearance-none [&::-webkit-slider-thumb]:rounded-b-md [&::-webkit-slider-thumb]:border [&::-webkit-slider-thumb]:border-[#666] [&::-webkit-slider-thumb]:bg-[#eee]" />
            <button aria-label="Zoom in" className="ml-2"><svg className="h-4 w-4" viewBox="0 0 16 16"><circle cx="8" cy="8" r="7" fill="#f2f2f2" stroke="#777" /><path d="M4 8h8M8 4v8" stroke="#555" strokeWidth="2" /></svg></button>
          </div>
        </footer>
      </div>
    </section>
  );
}

/* ---------- task bar ---------- */

const TASKS = [
  ["Internet Explorer", false, <g key="i"><path d="M24 8c-10 0-16 7-16 16s6 16 16 16c7 0 12-4 14-10h-8c-4 5-13 3-13-4h23c1-11-6-18-16-18zm-7 13c1-8 13-8 14 0z" fill="#2a9be8" stroke="#0e4f9c" /><path d="M4 42C-2 34 16 8 38 4c8-1 7 6 5 10 1-5-1-7-5-6C20 14 4 36 9 42c2 1 5 0 8-1-5 4-10 5-13 1z" fill="#f7c62f" /></g>],
  ["Windows Explorer", true, <g key="e"><path d="M4 8h12l3 4h22v26H4z" fill="#f4dc86" stroke="#b99434" /><path d="M8 3h10v8H8zM20 7h10v6H20z" fill="#fff" stroke="#aaa" /><path d="M9 4h3v4H9z" fill="#2aa52a" /><path d="M21 8h3v3h-3z" fill="#d33" /><path d="M4 15h37v24H4z" fill="#fbeaa9" stroke="#c8a548" /><path d="M10 44V30q0-3 3-3h20q3 0 3 3v14h-6V33H16v11z" fill="#a9dcf5" stroke="#4b9cc8" /></g>],
  ["Firefox", false, <FirefoxArt key="f" />],
  ["MATLAB", true, <MatlabArt key="m" />],
  ["Foxit Reader", true, <FoxitArt key="x" />],
  ["Paint", true, <PaletteArt key="p" />],
];

function Taskbar() {
  return (
    <footer className="absolute inset-x-0 bottom-0 flex h-10 items-center border-t border-[#0c3358] bg-[linear-gradient(90deg,#1f5f96_0px,#2874ab_90px,#3a98cb_280px,#4aa6d6_520px,#2f8cc8_720px,#2a78b8_1000px,#2b69ad_1500px,#2c62a2_1660px,#1d4676_1700px,#16365f_1920px)] shadow-[inset_0_1px_0_rgba(255,255,255,0.45)]">
      <button aria-label="Start" className="ml-2 mr-[14px] shrink-0">
        <svg className="h-9 w-9" viewBox="0 0 36 36">
          <defs><radialGradient id="orb" cx=".5" cy="1" r=".9"><stop offset="0" stopColor="#3fd5fa" /><stop offset=".5" stopColor="#1c5f9c" /><stop offset="1" stopColor="#7f9db8" /></radialGradient></defs>
          <circle cx="18" cy="18" r="17" fill="url(#orb)" stroke="#12406c" />
          <path d="M10 11c3-2 5-1 7 0l-1 6c-2-1-4-2-7 0z" fill="#f0592a" /><path d="M18 12c3 1 5 1 8-1l-2 7c-2 1-4 1-7 0z" fill="#8cc63f" />
          <path d="M9 18c2-2 5-1 7 0l-2 7c-2-1-4-2-7 0z" fill="#3fa9f5" /><path d="M17 19c2 1 5 1 7 0l-2 6c-2 2-4 1-7 1z" fill="#fcc735" />
        </svg>
      </button>
      <div className="flex gap-0.5">
        {TASKS.map(([name, open, art]) => (
          <div key={name} className="flex h-[38px] w-[60px]">
            <button aria-label={name} className={`flex flex-1 items-center justify-center rounded-sm border ${open ? "border-[#d5ecf9]/80 bg-[linear-gradient(135deg,rgba(255,255,255,0.65),rgba(255,255,255,0.25))]" : "border-transparent"}`}>
              <svg className="h-8 w-8 overflow-visible" viewBox="0 0 48 48">{art}</svg>
            </button>
            {name === "MATLAB" && <i className="ml-px w-[5px] rounded-r-sm border border-l-0 border-[#d5ecf9]/80 bg-white/20" />}
          </div>
        ))}
      </div>
      <div className="ml-auto flex items-center text-[11px] text-white">
        <span className="w-8">NO</span>
        <svg className="mr-3 h-1.5 w-2" viewBox="0 0 8 6"><path d="M4 0l4 6H0z" fill="#fff" /></svg>
        <svg className="mr-2 h-4 w-4" viewBox="0 0 16 16"><path d="M2 1v14" stroke="#fff" strokeWidth="2" /><path d="M3 2h5l2 2h4v6H9L7 8H3z" fill="#fff" /><circle cx="11" cy="11" r="4.500" fill="#d82a1e" /><path d="M9 9l4 4M13 9l-4 4" stroke="#fff" strokeWidth="1.300" /></svg>
        <svg className="mr-2 h-4 w-4" viewBox="0 0 16 16"><path d="M5 3h10v9H5z" fill="#33506f" stroke="#fff" /><path d="M1 0v4h4V0M3 4v10h5" stroke="#fff" fill="none" /><path d="M11 6l5 9H6z" fill="#fcd116" stroke="#8b7200" strokeWidth=".6" /><path d="M11 9v3M11 13v1" stroke="#000" /></svg>
        <svg className="mr-4 h-4 w-4" viewBox="0 0 16 16"><path d="M1 5h3l4-4v14l-4-4H1z" fill="#fff" /><path d="M10 5q2 3 0 6M12 3q4 5 0 10" fill="none" stroke="#fff" /></svg>
        <div className="mr-2.5 flex w-[58px] flex-col items-center text-center text-[11px] leading-[17px]"><span>12:58</span><span>22.09.2016</span></div>
        <button aria-label="Show desktop" className="h-[38px] w-[14px] border border-[#0c2440] bg-[linear-gradient(#7f9ab5,#2b4c74_60%,#1c3a60)]" />
      </div>
    </footer>
  );
}

export default function App() {
  return (
    <div className="flex h-screen w-full overflow-hidden font-['Open_Sans','Noto_Sans',sans-serif]">
      <Simulink />
      <div className="relative min-w-0 flex-1 overflow-hidden bg-[#0060c8]">
        <Wallpaper />
        <DesktopIcons />
        <Paint />
        <Taskbar />
      </div>
    </div>
  );
}
